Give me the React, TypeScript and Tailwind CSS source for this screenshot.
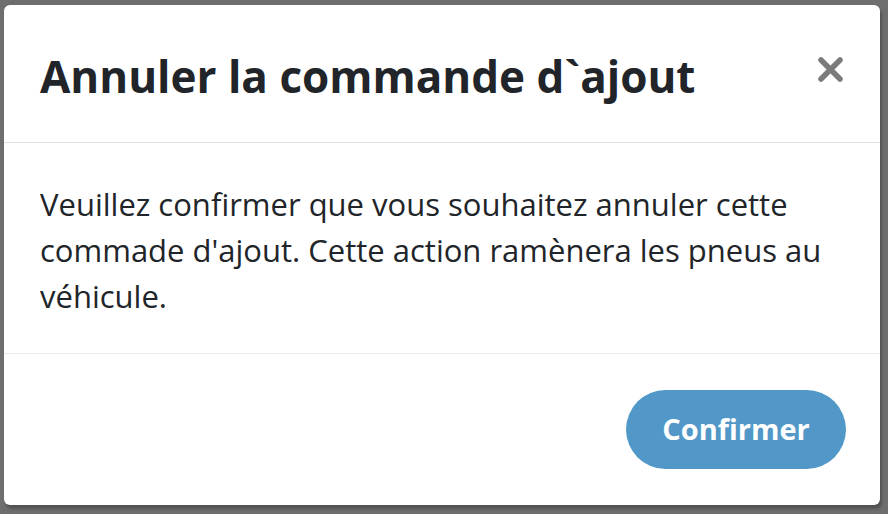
import React from 'react';

function CloseIcon() {
  return (
    <svg width="25" height="25" viewBox="0 0 25 25" fill="none">
      <path d="M3 3 L22 22 M22 3 L3 22" stroke="#7b7b7b" strokeWidth="5.5" strokeLinecap="round" />
    </svg>
  );
}

export default function App() {
  return (
    <div
      className="w-[888px] h-[514px] bg-[#6e6e6e] pt-[5px] pl-[4px] overflow-hidden"
      style={{ fontFamily: '"Open Sans", "Liberation Sans", sans-serif' }}
    >
      <div className="w-[876px] h-[500px] bg-white rounded-[6px] flex flex-col text-[#212529] shadow-[2px_4px_3px_rgba(0,0,0,0.25)]">
        <div className="flex items-center justify-between pl-[36px] pr-[37px] h-[138px] border-b border-[#dee2e6]">
          <h2 className="text-[44px] font-bold leading-none pt-[4px]">Annuler la commande d`ajout</h2>
          <button className="flex items-center justify-center -mt-[8px]">
            <CloseIcon />
          </button>
        </div>
        <div className="flex-1 px-[36px] pt-[38px] border-b border-[#e9ecef]">
          <p className="text-[31px] leading-[46px]">
            Veuillez confirmer que vous souhaitez annuler cette commade d'ajout. Cette action ramènera les pneus au véhicule.
          </p>
        </div>
        <div className="h-[151px] flex items-center justify-end pr-[34px] pb-[1px]">
          <button className="w-[220px] h-[79px] rounded-full bg-[#5198c8] text-white text-[29px] font-bold">
            Confirmer
          </button>
        </div>
      </div>
    </div>
  );
}
